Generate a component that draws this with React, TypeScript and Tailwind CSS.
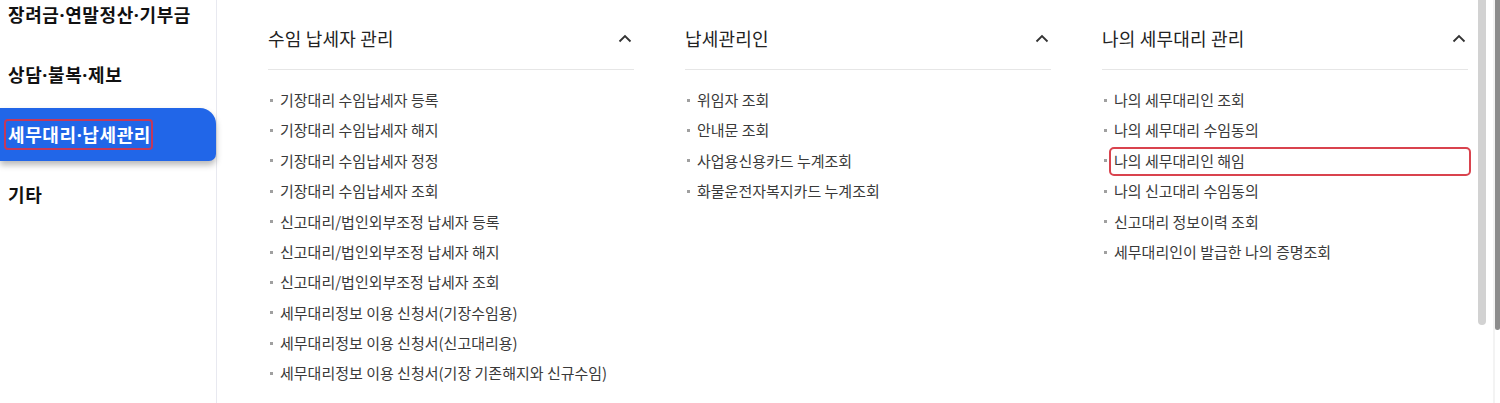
const sideItems = ["장려금·연말정산·기부금", "상담·불복·제보", "세무대리·납세관리", "기타"]

type Menu = { title: string; items: string[] }

const menus: Menu[] = [
  {
    title: "수임 납세자 관리",
    items: [
      "기장대리 수임납세자 등록",
      "기장대리 수임납세자 해지",
      "기장대리 수임납세자 정정",
      "기장대리 수임납세자 조회",
      "신고대리/법인외부조정 납세자 등록",
      "신고대리/법인외부조정 납세자 해지",
      "신고대리/법인외부조정 납세자 조회",
      "세무대리정보 이용 신청서(기장수임용)",
      "세무대리정보 이용 신청서(신고대리용)",
      "세무대리정보 이용 신청서(기장 기존해지와 신규수임)",
    ],
  },
  {
    title: "납세관리인",
    items: ["위임자 조회", "안내문 조회", "사업용신용카드 누계조회", "화물운전자복지카드 누계조회"],
  },
  {
    title: "나의 세무대리 관리",
    items: [
      "나의 세무대리인 조회",
      "나의 세무대리 수임동의",
      "나의 세무대리인 해임",
      "나의 신고대리 수임동의",
      "신고대리 정보이력 조회",
      "세무대리인이 발급한 나의 증명조회",
    ],
  },
]

function ChevronUp() {
  return (
    <svg width="14" height="9" viewBox="0 0 14 9" fill="none" className="mr-[2px]">
      <path d="M1.5 7.5 7 2l5.5 5.5" stroke="#333" strokeWidth="1.8" />
    </svg>
  )
}

// the middle dot is narrow in the original, so it is set in a latin face
function DottedLabel({ text }: { text: string }) {
  const parts = text.split("·")
  return (
    <>
      {parts.map((part, i) => (
        <span key={i}>
          {i > 0 && <span style={{ fontFamily: '"Noto Sans", sans-serif' }}>·</span>}
          {part}
        </span>
      ))}
    </>
  )
}

export default function App() {
  return (
    <div
      className="flex w-[1500px] h-[403px] overflow-hidden bg-white"
      style={{ fontFamily: '"Noto Sans CJK KR", "Noto Sans", sans-serif' }}
    >
      {/* Sidebar */}
      <aside className="w-[217px] shrink-0 border-r border-[#e8e9f0]">
        <ul className="-mt-[12px] flex flex-col gap-[7px]">
          {sideItems.map((label) => {
            const active = label === "세무대리·납세관리"
            return (
              <li
                key={label}
                className={
                  active
                    ? "h-[53px] flex items-center pl-[8px] bg-[#2166e8] text-white rounded-tr-[16px] rounded-br-[7px] shadow-[0_4px_6px_rgba(0,0,0,0.28)]"
                    : "h-[53px] flex items-center pl-[8px] text-[#111]"
                }
              >
                <span className="relative text-[18px] font-bold tracking-[0.6px]">
                  <DottedLabel text={label} />
                  {active && (
                    <span className="absolute -left-[4px] -right-[2px] top-[-2px] bottom-[-1px] border-2 border-[#c4385a] rounded-[4px]" />
                  )}
                </span>
              </li>
            )
          })}
        </ul>
      </aside>

      {/* Menus */}
      <main className="flex-1 pl-[51px] pt-[24px]">
        <div className="grid grid-cols-[366px_366px_366px] gap-x-[51px]">
          {menus.map((menu) => (
            <section key={menu.title}>
              <div className="h-[28px] flex items-center justify-between">
                <h2 className="text-[18px] text-[#222] tracking-[0.2px]">{menu.title}</h2>
                <ChevronUp />
              </div>
              <div className="mt-[17px] border-t border-[#e6e6e6]" />
              <ul className="pt-[15px]">
                {menu.items.map((item) => (
                  <li key={item} className="relative flex items-center h-[30.4px] text-[15px] text-[#3a3a3a]">
                    <span className="w-[3px] h-[3px] bg-[#a0a0a0] ml-[2px] mr-[7px] shrink-0" />
                    <span>{item}</span>
                    {item === "나의 세무대리인 해임" && (
                      <span className="absolute left-[7px] -right-[3px] top-[1px] bottom-[0px] border-2 border-[#d9434e] rounded-[5px]" />
                    )}
                  </li>
                ))}
              </ul>
            </section>
          ))}
        </div>
      </main>

      {/* Scrollbars */}
      <div className="w-[22px] shrink-0 flex">
        <div className="w-[8px] h-[325px] bg-[#d2d2d2] rounded-b-[4px]" />
        <div className="ml-[7px] w-[2px] h-full bg-[#f3f3f3]" />
        <div className="w-[5px] h-[330px] bg-[#8c8c8c] rounded-b-[3px]" />
      </div>
    </div>
  )
}
